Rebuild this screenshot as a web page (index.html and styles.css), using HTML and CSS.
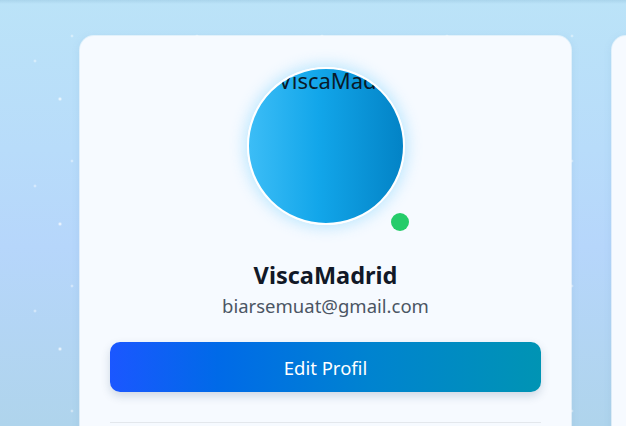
FILE: index.html
```html
<!DOCTYPE html>
<html lang="id">
<head>
<meta charset="utf-8">
<title>Profil</title>
<link rel="stylesheet" href="styles.css">
</head>
<body>
<div class="topline"></div>
<main class="cards">
  <section class="card">
    <div class="avatar-wrap">
      <div class="avatar">
        <span class="avatar-alt">ViscaMadrid</span>
      </div>
      <span class="status"></span>
    </div>
    <h1 class="name">ViscaMadrid</h1>
    <p class="email">biarsemuat@gmail.com</p>
    <button class="edit-btn" type="button">Edit Profil</button>
    <hr class="divider">
  </section>
  <section class="card"></section>
</main>
</body>
</html>
```
FILE: styles.css
```css
html, body {
  margin: 0;
  padding: 0;
  height: 100%;
  overflow: hidden;
}

body {
  font-family: "Noto Sans", "Open Sans", sans-serif;
  background:
    radial-gradient(circle, rgba(255,255,255,0.9) 0.7px, transparent 1.2px) 9.5px -26.5px / 125px 125px,
    radial-gradient(circle, rgba(255,255,255,0.8) 1px, transparent 1.6px) -2.5px 36.5px / 125px 125px,
    radial-gradient(circle, rgba(255,255,255,0.75) 0.8px, transparent 1.3px) -27.5px -1.5px / 125px 125px,
    linear-gradient(180deg, #bbe3f8 0%, #b8dcfa 35%, #b6d6fb 58%, #afd4ec 100%);
  background-repeat: repeat, repeat, repeat, no-repeat;
}

.topline {
  height: 4px;
  background: linear-gradient(180deg, rgba(120,170,200,0.25), rgba(120,170,200,0));
  margin-bottom: 32px;
}

.cards {
  display: flex;
  gap: 41px;
  padding-left: 80px;
}

.card {
  flex: 0 0 491px;
  box-sizing: border-box;
  background: #f6faff;
  border-radius: 14px;
  padding: 31px 30px 0;
  height: 420px;
  display: flex;
  flex-direction: column;
  align-items: center;
  box-shadow: 0 0 0 1px rgba(255,255,255,0.6), 0 2px 8px rgba(90,140,180,0.15);
}

.avatar-wrap {
  position: relative;
  width: 158px;
  height: 158px;
}

.avatar {
  box-sizing: border-box;
  width: 158px;
  height: 158px;
  border-radius: 50%;
  border: 2px solid #ffffff;
  background: linear-gradient(90deg, #3cbdf6 0%, #12a6ea 45%, #0383c6 100%);
  box-shadow: 0 0 14px 3px rgba(125,211,252,0.45);
  overflow: hidden;
}

.avatar-alt {
  display: block;
  padding-left: 30px;
  margin-top: -1px;
  font-family: "Noto Sans", sans-serif;
  font-size: 22px;
  line-height: 25px;
  color: #0a1a28;
  white-space: nowrap;
}

.status {
  position: absolute;
  left: 144px;
  top: 146px;
  width: 18px;
  height: 18px;
  border-radius: 50%;
  background: #25cc6a;
}

.name {
  margin: 36px 0 0;
  font-size: 23.5px;
  line-height: 28px;
  font-weight: 700;
  color: #111827;
}

.email {
  margin: 4px 0 0;
  font-size: 18.5px;
  line-height: 26px;
  color: #4b5563;
}

.edit-btn {
  margin-top: 23px;
  width: 431px;
  height: 50px;
  border: none;
  border-radius: 10px;
  background: linear-gradient(90deg, #1b57ff 0%, #006ae8 25%, #0083d0 60%, #0094b4 100%);
  color: #ffffff;
  font-family: "Noto Sans", sans-serif;
  font-size: 18.5px;
  box-shadow: 0 4px 10px rgba(30,60,100,0.18);
}

.divider {
  width: 431px;
  margin: 30px 0 0;
  border: none;
  border-top: 1px solid #e3e7ec;
}
```
